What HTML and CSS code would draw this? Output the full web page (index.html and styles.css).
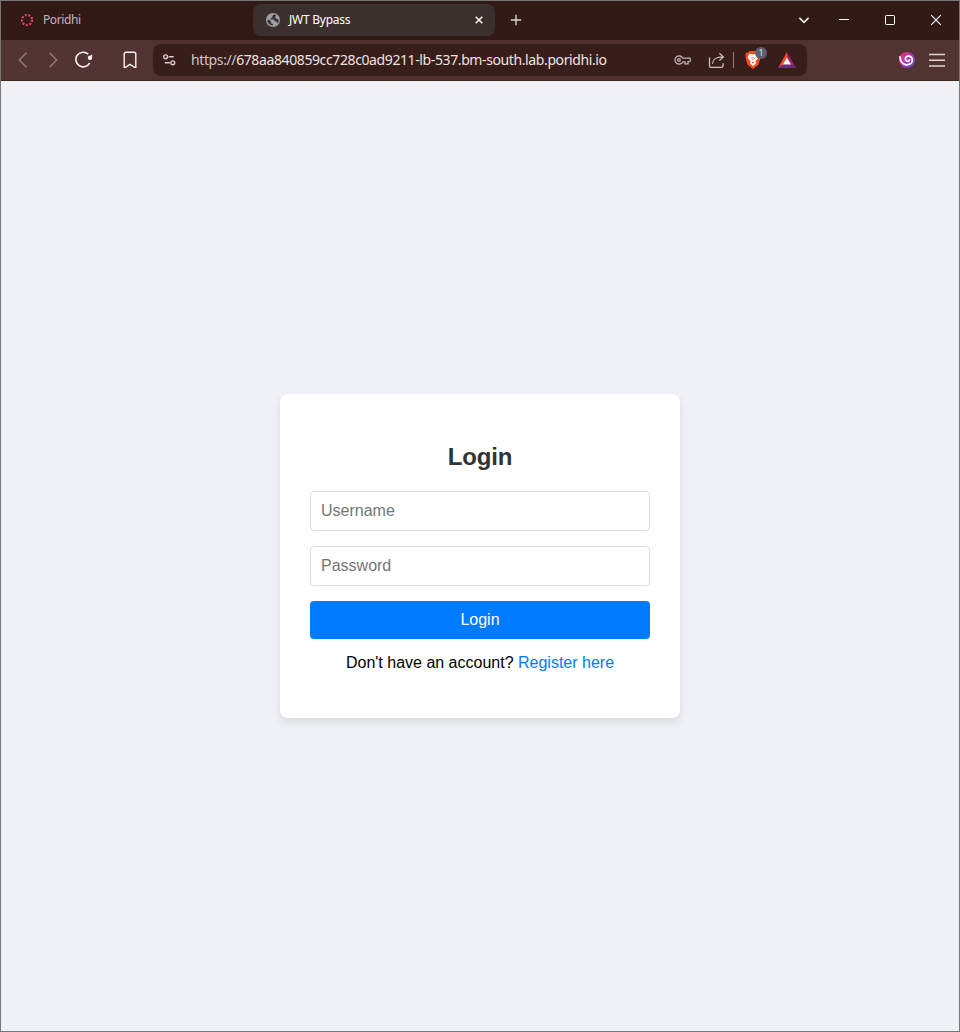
FILE: index.html
```html
<!DOCTYPE html>
<html lang="en">
<head>
<meta charset="utf-8">
<title>JWT Bypass</title>
<link rel="stylesheet" href="styles.css">
</head>
<body>
<div class="window">
  <header class="tabstrip">
    <div class="tab">
      <svg class="ico fav-poridhi" width="14" height="14" viewBox="0 0 14 14"><circle cx="7" cy="7" r="5" fill="none" stroke="#ea2f6c" stroke-width="2.2" stroke-dasharray="1.9 1.59" /><circle cx="7" cy="7" r="5.5" fill="none" stroke="#f5784a" stroke-width="1" stroke-dasharray="1 2.84" /></svg>
      <span class="tab-title">Poridhi</span>
    </div>
    <div class="tab tab-active">
      <svg class="ico" width="14" height="14" viewBox="0 0 14 14"><circle cx="7" cy="7" r="7" fill="#9aa0a6"/><path d="M7.6 1.5 6.2 3.4 6.3 4.7 4.6 5 4.6 6.4 8.2 6.5 8.9 8.4 10.5 8.5 11.7 10.4A5.7 5.7 0 0 0 12.6 6.4L10.8 6 9.4 4.8 9.3 3.5 10.2 2.2A5.6 5.6 0 0 0 7.6 1.5ZM1.4 6.7A5.6 5.6 0 0 0 6.8 12.6L7 11 5.2 10.5 5.1 8.9 3.8 7Z" fill="#3c302f"/></svg>
      <span class="tab-title">JWT Bypass</span>
      <svg class="ico tab-close" width="8" height="8" viewBox="0 0 8 8"><path d="M.7.7l6.6 6.6M7.3.7.7 7.3" stroke="#f4eeee" stroke-width="1.6"/></svg>
    </div>
    <svg class="ico new-tab" width="12" height="12" viewBox="0 0 12 12"><path d="M6 .8v10.4M.8 6h10.4" stroke="#ddd4d3" stroke-width="1.4"/></svg>
    <div class="controls">
      <svg class="ico" width="12" height="12" viewBox="0 0 12 12"><path d="M1.4 3.8 6 8.3l4.6-4.5" fill="none" stroke="#eee8e7" stroke-width="1.7"/></svg>
      <svg class="ico" width="12" height="12" viewBox="0 0 12 12"><path d="M1 5.5h10" stroke="#fff"/></svg>
      <svg class="ico" width="12" height="12" viewBox="0 0 12 12"><rect x="1.5" y="1.5" width="9" height="9" rx=".7" fill="none" stroke="#fff"/></svg>
      <svg class="ico" width="12" height="12" viewBox="0 0 12 12"><path d="m1.2 1.2 9.6 9.6m0-9.6-9.6 9.6" stroke="#fff" stroke-width="1.1"/></svg>
    </div>
  </header>

  <nav class="toolbar">
    <svg class="ico back" width="10" height="16" viewBox="0 0 10 16"><path d="M8.5.8 1.3 8l7.2 7.2" fill="none" stroke="#927b78" stroke-width="1.5"/></svg>
    <svg class="ico forward" width="10" height="16" viewBox="0 0 10 16"><path d="M1.5.8 8.7 8l-7.2 7.2" fill="none" stroke="#927b78" stroke-width="1.5"/></svg>
    <svg class="ico reload" width="18" height="18" viewBox="0 0 18 18"><path d="M13.2 3.2A7.300 7.300 0 1 0 14.700 11.800" fill="none" stroke="#f8f3f2" stroke-width="1.6"/><circle cx="15" cy="6.800" r="2.200" fill="#f8f3f2"/><path d="m15.500 4.200 1.700-.6V6Z" fill="#f8f3f2"/></svg>
    <svg class="ico bookmark" width="14" height="18" viewBox="0 0 14 18"><path d="M3 1.3h8a1.8 1.8 0 0 1 1.8 1.8v13.2h-1.3L7 13.3l-4.5 3H1.2V3.1A1.8 1.8 0 0 1 3 1.3Z" fill="none" stroke="#f8f3f2" stroke-width="1.4"/></svg>
    <div class="address">
      <svg class="ico site" width="14" height="14" viewBox="0 0 14 14"><g fill="none" stroke="#d9cdcb" stroke-width="1.4"><circle cx="3.600" cy="3.800" r="1.900"/><path d="M6.700 3.800h5M2.800 9.800h5"/><circle cx="10.800" cy="9.800" r="1.900"/></g></svg>
      <span class="url"><span class="scheme">https://</span>678aa840859cc728c0ad9211-lb-537.bm-south.lab.poridhi.io</span>
      <svg class="ico key" width="17" height="12" viewBox="0 0 17 12"><g fill="none" stroke="#bfb0ae" stroke-width="1.3"><path d="M8.8 4.2A4.1 4.1 0 1 0 8.8 7.8H11v2h3V7.6h1.4a.9.9 0 0 0 .9-.9V5a.9.9 0 0 0-.9-.8Z"/><circle cx="5" cy="6" r="1.3"/></g></svg>
      <svg class="ico share" width="17" height="17" viewBox="0 0 17 17"><g fill="none" stroke="#cdbfbd" stroke-width="1.3"><path d="M1.5 5.5v8.2a1.7 1.7 0 0 0 1.7 1.7h10.2a1.7 1.7 0 0 0 1.7-1.7v-2.4"/><path d="M4.5 11.8c.2-4.4 2.4-6.900 10.600-6.900M11.400 1.200l3.900 3.700-3.900 3.700"/></g></svg>
      <i class="divider"></i>
      <div class="shield">
        <svg class="ico" width="16" height="18" viewBox="0 0 16 18"><path d="M4.5 0h7l1.700 1.700 1.600-.2.9 2.200-.5 1.500.3 1-1.900 7.300L8 18l-5.600-4.500L.5 6.200l.3-1-.5-1.500.9-2.200 1.600.2Z" fill="#fb4b1a"/><path d="M4.700 2.800 8 3.400l3.300-.6 1.900 2.700-.5 1.900-2.300 3.100.6 1.900L8 14.900l-3-2.500.6-1.900-2.300-3.100-.5-1.900Z" fill="#fff"/><path d="m4.800 6.300 2 .5-.5 1Zm6.400 0-2 .5.500 1ZM7.700 6h.6l.2 3.300h-1ZM6.600 11.500 8 10.700l1.400.8L8 12.400Z" fill="#fb4b1a"/></svg>
        <span class="badge">1</span>
      </div>
      <svg class="ico bat" width="18" height="16" viewBox="0 0 18 16"><path d="M9 0 0 16l5.300-3.600L9 6Z" fill="#ff4b24"/><path d="M9 0v6l3.700 6.400L18 16Z" fill="#9e1f63"/><path d="M0 16h18l-5.300-3.600H5.300Z" fill="#662d91"/><path d="m9 5.400 4.100 7.200H4.900Z" fill="#fff"/></svg>
    </div>
    <svg class="ico leo" width="16" height="16" viewBox="0 0 16 16"><defs><linearGradient id="swirl" x1="0" y1="0" x2="1" y2="1"><stop offset="0" stop-color="#f03a68"/><stop offset=".5" stop-color="#b52fb8"/><stop offset="1" stop-color="#4a4fd4"/></linearGradient></defs><circle cx="8" cy="8" r="8" fill="url(#swirl)"/><path d="M1 5C1.200 10.500 5 13.400 9 12.700 12.200 12.100 13.700 9.700 13.300 7.300 12.900 4.800 10.300 3.400 8.100 4.300 6 5.200 5.800 8 7.500 9c1.400.8 3 .1 3-1.200" fill="none" stroke="#fff" stroke-width="1.800" stroke-linecap="round"/></svg>
    <svg class="ico menu" width="16" height="14" viewBox="0 0 16 14"><path d="M0 1.500h16M0 7.300h16M0 13h16" stroke="#e0d6d5" stroke-width="1.500"/></svg>
  </nav>

  <main class="page">
    <form class="card">
      <h2 class="heading">Login</h2>
      <input class="field" type="text" placeholder="Username">
      <input class="field" type="password" placeholder="Password">
      <button class="submit" type="button">Login</button>
      <p class="note">Don't have an account? <a class="link" href="#">Register here</a></p>
    </form>
  </main>
</div>
</body>
</html>
```
FILE: styles.css
```css
* { box-sizing: border-box; }
body { margin: 0; font-family: "Liberation Sans", Arial, sans-serif; }
.window { height: 1032px; border: 1px solid #777; display: flex; flex-direction: column; overflow: hidden; }
.ico { display: block; flex: none; }

.tabstrip { height: 39px; flex: none; display: flex; align-items: center; background: #311a16; padding: 0 17px 1px 10px; font: 12px/16px "Noto Sans", "Open Sans", sans-serif; }
.tab { width: 242px; height: 32px; display: flex; align-items: center; padding: 0 12px 0 9px; color: #c3b8b6; }
.tab-title { margin-left: 9px; letter-spacing: -0.4px; white-space: nowrap; }
.tab-active { background: #3c302f; border-radius: 8px; color: #fff; padding-left: 13px; }
.tab-active .tab-title { letter-spacing: -0.25px; }
.tab-close { margin-left: auto; }
.new-tab { margin-left: 15px; }
.controls { margin-left: auto; display: flex; }
.controls .ico { margin-left: 34px; }
.controls .ico:first-child { margin: 0 -6px 0 0; }

.toolbar { height: 41px; flex: none; display: flex; align-items: center; background: #513331; border-bottom: 1px solid #402624; padding: 0 14px 0 17px; }
.forward { margin-left: 20px; }
.reload { margin-left: 17px; }
.bookmark { margin-left: 30px; }
.address { width: 654px; height: 32px; margin-left: 16px; display: flex; align-items: center; background: #381e1b; border-radius: 8px; padding: 0 11px 0 9px; }
.url { width: 416px; margin-left: 15px; font: 14px/18px "Noto Sans", "Open Sans", sans-serif; letter-spacing: -0.39px; color: #eee2e0; white-space: nowrap; }
.scheme { color: #d2c4c1; }
.key { margin-left: 67px; }
.share { margin-left: 17px; }
.divider { width: 1px; height: 16px; background: #927c78; margin-left: 8px; }
.shield { position: relative; margin-left: 11px; }
.badge { position: absolute; left: 10px; top: -4px; width: 12px; height: 12px; border-radius: 6px; background: #5c606c; color: #e7e8ec; font: 8px/12px "Noto Sans", sans-serif; text-align: center; }
.bat { margin-left: auto; }
.leo { margin-left: 92px; }
.menu { margin-left: auto; }

.page { flex: 1; display: flex; align-items: center; justify-content: center; background: #f0f1f6; }
.card { width: 400px; height: 324px; padding: 30px; background: #fff; border-radius: 8px; box-shadow: 0 4px 8px rgba(0, 0, 0, 0.1); display: flex; flex-direction: column; }
.heading { margin: 19px 0 21px; font-size: 24px; line-height: 27px; letter-spacing: -0.2px; text-align: center; color: #333; }
.field { height: 40px; margin: 0 0 15px; padding: 10px; border: 1px solid #ddd; border-radius: 4px; font: 16px "Liberation Sans", Arial, sans-serif; }
.field::placeholder { color: #757575; }
.submit { height: 38px; padding: 10px; border: 0; border-radius: 4px; background: #007bff; color: #fff; font: 16px/18px "Liberation Sans", Arial, sans-serif; }
.note { margin: 15px 0 0; font-size: 16px; line-height: 18px; text-align: center; }
.link { color: #007bff; text-decoration: none; }
```
